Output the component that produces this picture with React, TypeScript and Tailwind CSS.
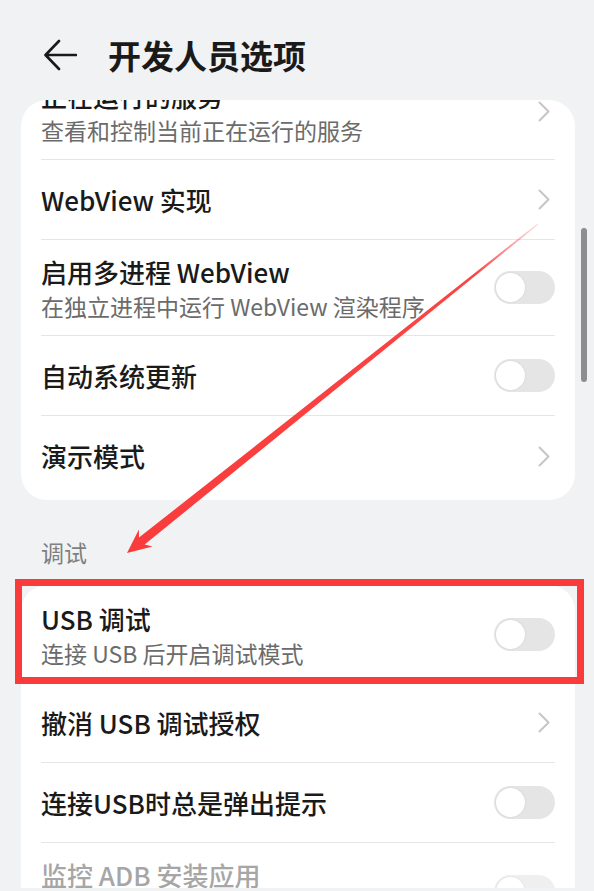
import React from 'react';

const Chevron = () => (
  <svg width="12" height="21" viewBox="0 0 12 21" className="mr-[5px] shrink-0">
    <polyline points="1.5,1.5 10.5,10.5 1.5,19.5" fill="none" stroke="#c6c6c6" strokeWidth="2" strokeLinecap="round" strokeLinejoin="round" />
  </svg>
);

const Toggle = ({ disabled = false }: { disabled?: boolean }) => (
  <div className={`w-[61px] h-[33px] rounded-full shrink-0 p-[2px] flex items-center ${disabled ? 'bg-[#efefef]' : 'bg-[#e5e5e5]'}`}>
    <div className="w-[29px] h-[29px] rounded-full bg-white shadow-[0_0_2px_rgba(0,0,0,0.12)]" />
  </div>
);

type RowProps = {
  title: string;
  sub?: string;
  tall?: boolean;
  right: 'chevron' | 'toggle';
  last?: boolean;
  disabled?: boolean;
  className?: string;
};

const Row = ({ title, sub, tall, right, last, disabled, className = '' }: RowProps) => {
  const isTall = tall || !!sub;
  return (
    <div className={`mx-[20px] flex items-center justify-between ${isTall ? 'h-[96px]' : 'h-[80px]'} ${last ? '' : 'border-b border-[#e6e6e6]'} ${className}`}>
      <div className={`flex flex-col min-w-0 ${isTall ? 'self-start pt-[15px]' : ''}`}>
        <div className={`text-[26px] leading-[34px] font-medium whitespace-nowrap ${disabled ? 'text-[#a6a6a6]' : 'text-[#1a1a1a]'}`}>{title}</div>
        {sub && <div className="mt-[2px] text-[23px] leading-[30px] text-[#6b6b6b] whitespace-nowrap">{sub}</div>}
      </div>
      {right === 'chevron' ? <Chevron /> : <Toggle disabled={disabled} />}
    </div>
  );
};

export default function App() {
  return (
    <div
      className="relative w-[594px] h-[891px] overflow-hidden bg-[#f1f2f4]"
      style={{ fontFamily: '"Noto Sans CJK SC", "Noto Sans", sans-serif' }}
    >
      {/* header */}
      <div className="h-[100px] flex items-center pt-[10px]">
        <svg width="34" height="32" viewBox="0 0 34 32" className="ml-[43px]">
          <path d="M33 16H3M16 2L2.5 16L16 30" fill="none" stroke="#1a1a1a" strokeWidth="2.6" strokeLinecap="round" strokeLinejoin="round" />
        </svg>
        <h1 className="ml-[31px] text-[33px] leading-[44px] font-bold text-[#1a1a1a]">开发人员选项</h1>
      </div>

      {/* list */}
      <div className="h-[788px] overflow-hidden ml-[21px] w-[554px]">
        <div className="bg-white rounded-[26px] overflow-hidden pb-[4px]">
          <Row title="正在运行的服务" sub="查看和控制当前正在运行的服务" right="chevron" className="-mt-[36px]" />
          <Row title="WebView 实现" right="chevron" />
          <Row title="启用多进程 WebView" sub="在独立进程中运行 WebView 渲染程序" right="toggle" />
          <Row title="自动系统更新" right="toggle" />
          <Row title="演示模式" right="chevron" last />
        </div>

        <div className="h-[85px] pt-[37px] pl-[20px] text-[23px] leading-[30px] text-[#7f7f7f]">调试</div>

        <div className="bg-white rounded-[26px] pt-[2px]">
          <Row title="USB 调试" sub="连接 USB 后开启调试模式" right="toggle" />
          <Row title="撤消 USB 调试授权" right="chevron" />
          <Row title="连接USB时总是弹出提示" right="toggle" />
          <Row title="监控 ADB 安装应用" tall right="toggle" disabled last />
        </div>
      </div>

      {/* scrollbar */}
      <div className="absolute left-[581px] top-[228px] w-[6px] h-[154px] rounded-full bg-[#8e8e8e]" />

      {/* annotation: red box */}
      <div className="absolute left-[15px] top-[579px] w-[569px] h-[105px] border-[7px] border-[#fa3b3b]" />

      {/* annotation: red arrow */}
      <svg className="absolute left-0 top-0 pointer-events-none" width="594" height="891" viewBox="0 0 594 891">
        <defs>
          <linearGradient id="shaft" gradientUnits="userSpaceOnUse" x1="538" y1="224" x2="127" y2="553">
            <stop offset="0" stopColor="#fa3b3b" stopOpacity="0.15" />
            <stop offset="0.15" stopColor="#fa3b3b" stopOpacity="0.95" />
            <stop offset="1" stopColor="#fa3b3b" stopOpacity="1" />
          </linearGradient>
        </defs>
        <polygon
          points="127,553 152.6,546.6 144.6,544.6 538.4,224.5 537.6,223.5 139,537.6 138.9,529.4"
          fill="url(#shaft)"
        />
      </svg>
    </div>
  );
}
